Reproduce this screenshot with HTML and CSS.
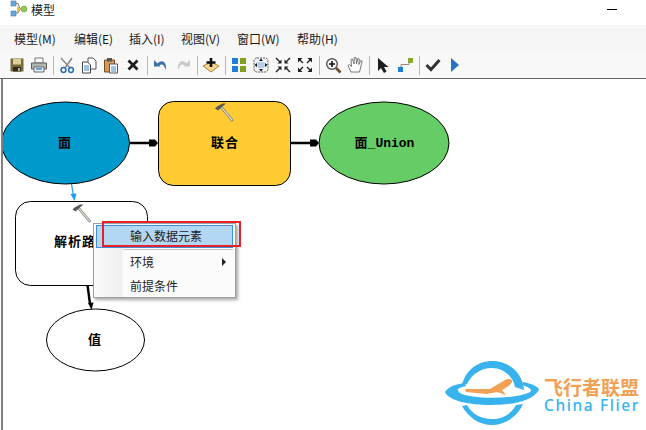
FILE: index.html
```html
<!DOCTYPE html>
<html lang="zh-CN">
<head>
    <meta charset="UTF-8">
    <title>模型</title>
    <link rel="stylesheet" href="styles.css">
</head>
<body>
    <svg class="defs" width="0" height="0">
        <defs>
            <g id="hammer">
                <path d="M6 4L17 17" stroke="#666" stroke-width="2.6" stroke-linecap="round"/>
                <path d="M6 4L17 17" stroke="#dcd8cc" stroke-width="1.4" stroke-linecap="round"/>
                <path d="M0 5.5L2 3.5L7.5 .5L11 .5L8 3L3 7.5Z" fill="#5a5a5a"/>
            </g>
        </defs>
    </svg>

    <div class="titlebar">
        <svg class="app-icon" width="18" height="18" viewBox="0 0 18 18">
            <path d="M4 3.5H8L10 9H14M10 9L8 13H4" fill="none" stroke="#8a7a4a" stroke-width="1"/>
            <rect x="1" y="1" width="5" height="5" fill="#6aa5dc" stroke="#4a7fb5" stroke-width=".6"/>
            <rect x="1" y="11" width="5" height="5" fill="#6aa5dc" stroke="#4a7fb5" stroke-width=".6"/>
            <path d="M7 6L11 9L7 12Z" fill="#f0c030"/>
            <circle cx="14" cy="9" r="3" fill="#92c85a" stroke="#6b9c3c" stroke-width=".6"/>
        </svg>
        <span class="title-text">模型</span>
        <div class="minimize"></div>
    </div>

    <div class="menubar">
        <span>模型(M)</span>
        <span>编辑(E)</span>
        <span>插入(I)</span>
        <span>视图(V)</span>
        <span>窗口(W)</span>
        <span>帮助(H)</span>
    </div>

    <div class="toolbar">
        <div class="tool"><svg width="16" height="16" viewBox="0 0 16 16"><path d="M1.5 1.5H14.5V14.5H1.5Z" fill="#7a6836"/><rect x="4" y="2" width="8" height="5.5" fill="#dccf9a"/><rect x="4" y="10" width="8" height="4.5" fill="#2e2a1e"/><rect x="9" y="11" width="2" height="3" fill="#b8b098"/></svg></div>
        <div class="tool"><svg width="18" height="16" viewBox="0 0 18 16"><path d="M5 1H13V6H5Z" fill="#fff" stroke="#777"/><path d="M1.5 6H16.5V12H1.5Z" fill="#b4b4b4" stroke="#5c5c5c"/><path d="M4 10H14V15H4Z" fill="#eef4fa" stroke="#666"/><path d="M6 12H12" stroke="#3f86c6" stroke-width="1.5"/></svg></div>
        <div class="tool-sep"></div>
        <div class="tool"><svg width="16" height="17" viewBox="0 0 16 17"><path d="M2 1L11 11M13 1L6 11" stroke="#8a8a8a" stroke-width="1.5"/><circle cx="4.5" cy="13" r="2.4" fill="none" stroke="#2a6fb0" stroke-width="1.5"/><circle cx="12" cy="13" r="2.4" fill="none" stroke="#2a6fb0" stroke-width="1.5"/></svg></div>
        <div class="tool"><svg width="16" height="17" viewBox="0 0 16 17"><path d="M7 1H12L15 4V12H7Z" fill="#fff" stroke="#555"/><path d="M1.5 5H6.5L9.5 8V16H1.5Z" fill="#fff" stroke="#444"/><path d="M3 9H8M3 11H8M3 13H8" stroke="#3f86c6"/></svg></div>
        <div class="tool"><svg width="16" height="17" viewBox="0 0 16 17"><path d="M1.5 3H11.5V15H1.5Z" fill="#d39a5e" stroke="#7a4a20"/><rect x="4" y="1" width="5" height="3.5" fill="#555"/><path d="M6.5 7H14.5V16H6.5Z" fill="#fff" stroke="#555"/><path d="M8 10H13M8 12H13M8 14H13" stroke="#3f86c6"/></svg></div>
        <div class="tool"><svg width="14" height="14" viewBox="0 0 14 14"><path d="M2.5 2.5L11.5 11.5M11.5 2.5L2.5 11.5" stroke="#1c1c1c" stroke-width="2.8"/></svg></div>
        <div class="tool-sep"></div>
        <div class="tool"><svg width="16" height="14" viewBox="0 0 16 14"><path d="M4 6C8 1 14 3 13 12C11 7 9 5 6 8Z" fill="#3f70a8"/><path d="M1 2V8.5H7.5Z" fill="#3f70a8"/></svg></div>
        <div class="tool"><svg width="16" height="14" viewBox="0 0 16 14"><path d="M12 6C8 1 2 3 3 12C5 7 7 5 10 8Z" fill="#c4c9c9"/><path d="M15 2V8.5H8.5Z" fill="#c4c9c9"/></svg></div>
        <div class="tool-sep"></div>
        <div class="tool"><svg width="18" height="18" viewBox="0 0 18 18"><path d="M1 10L9 6L17 10L9 16Z" fill="#f5d78e" stroke="#a8823a"/><path d="M9 2V11M4.5 6.5H13.5" stroke="#111" stroke-width="2.6"/></svg></div>
        <div class="tool-sep"></div>
        <div class="tool"><svg width="16" height="16" viewBox="0 0 16 16"><rect x="1" y="1" width="6" height="6" fill="#1f7fd6"/><rect x="9" y="1" width="6" height="6" fill="#7f9f1f"/><rect x="1" y="9" width="6" height="6" fill="#1f7fd6"/><rect x="9" y="9" width="6" height="6" fill="#7f9f1f"/></svg></div>
        <div class="tool"><svg width="16" height="16" viewBox="0 0 16 16"><rect x="1" y="1" width="14" height="14" rx="3" fill="#f2f4f6" stroke="#555" stroke-dasharray="2 1"/><rect x="4.5" y="5" width="7" height="6" fill="#b4cde8"/><path d="M8 1.5L10 4H6ZM8 14.5L6 12H10ZM1.5 8L4 6V10ZM14.5 8L12 10V6Z" fill="#111"/></svg></div>
        <div class="tool"><svg width="16" height="16" viewBox="0 0 16 16"><path d="M1 1L5 5M11 5L15 1M1 15L5 11M15 15L11 11" stroke="#222" stroke-width="1.4"/><path d="M6.5 6.5H2.5L6.5 2.5ZM9.5 6.5V2.5L13.5 6.5ZM6.5 9.5V13.5L2.5 9.5ZM9.5 9.5H13.5L9.5 13.5Z" fill="#222"/></svg></div>
        <div class="tool"><svg width="16" height="16" viewBox="0 0 16 16"><path d="M6 6L3 3M10 6L13 3M6 10L3 13M10 10L13 13" stroke="#222" stroke-width="1.4"/><path d="M1 1H5.5L1 5.5ZM15 1V5.5L10.5 1ZM1 15V10.5L5.5 15ZM15 15H10.5L15 10.5Z" fill="#222"/></svg></div>
        <div class="tool-sep"></div>
        <div class="tool"><svg width="17" height="17" viewBox="0 0 17 17"><circle cx="7" cy="7" r="5.3" fill="#f6f8fa" stroke="#555" stroke-width="1.4"/><path d="M7 4V10M4 7H10" stroke="#111" stroke-width="1.6"/><path d="M11 11L15.5 15.5" stroke="#6b4a2a" stroke-width="2.6"/></svg></div>
        <div class="tool"><svg width="17" height="18" viewBox="0 0 17 18"><path d="M4 16L1 9.5L2.5 8.5L4.5 10.5L4 3.5L5.5 3L7 8L7.3 1.5H9L9.5 8L10.8 2.5L12.3 3L11.8 8.5L13.8 4.5L15.2 5.2L13.5 12L12.5 16Z" fill="#fff" stroke="#777"/></svg></div>
        <div class="tool-sep"></div>
        <div class="tool"><svg width="14" height="17" viewBox="0 0 14 17"><path d="M2 1V14L5 11L8 16L10.5 14.5L8 10H12.5Z" fill="#1c1c1c"/></svg></div>
        <div class="tool"><svg width="17" height="16" viewBox="0 0 17 16"><path d="M4 11V7.5H12V4" fill="none" stroke="#9a8a7a"/><rect x="1" y="10" width="5" height="5" fill="#1f7fd6"/><rect x="11" y="1" width="5" height="5" fill="#8aa92a"/></svg></div>
        <div class="tool-sep"></div>
        <div class="tool"><svg width="16" height="14" viewBox="0 0 16 14"><path d="M1.5 7L6 11.5L14.5 2" fill="none" stroke="#333" stroke-width="3"/></svg></div>
        <div class="tool"><svg width="12" height="16" viewBox="0 0 12 16"><path d="M2 1L10 8L2 15Z" fill="#2a73c4"/></svg></div>
    </div>

    <div class="canvas">
        <svg class="diagram" width="646" height="351" viewBox="0 79 646 351">
            <path class="link" d="M130 143H150M290 143H310M87.5 285L90 304"/>
            <path class="head" d="M149 139.5H155L158 143L155 146.5H149Z"/>
            <path class="head" d="M310 139.5H316L319 143L316 146.5H310Z"/>
            <path class="head" d="M88 303L93.5 302.5L91.5 310Z"/>
            <path class="link-blue" d="M71.5 184L73.5 196"/>
            <path class="head-blue" d="M70.5 194L76.5 193.5L74.5 201Z"/>

            <ellipse class="node node-blue" cx="65.5" cy="143" rx="64" ry="41"/>
            <rect class="node node-yellow" x="158.5" y="101.5" width="132" height="84" rx="15"/>
            <ellipse class="node node-green" cx="384" cy="143" rx="65" ry="41"/>
            <rect class="node" x="15.5" y="201.5" width="132" height="84" rx="15"/>
            <ellipse class="node" cx="95.5" cy="340" rx="49" ry="31"/>

            <use href="#hammer" x="215" y="103"/>
            <use href="#hammer" x="72.5" y="204"/>

            <text class="label" x="65" y="146.5">面</text>
            <text class="label" x="225" y="146.5">联合</text>
            <text class="label label-mono" x="384.5" y="146.5">面_Union</text>
            <text class="label label-left" x="54" y="246">解析路径</text>
            <text class="label" x="95" y="344">值</text>
        </svg>

        <div class="gutter-line"></div>

        <div class="context-menu">
            <div class="menu-item active">输入数据元素</div>
            <div class="menu-sep"></div>
            <div class="menu-item">环境<span class="submenu-arrow"></span></div>
            <div class="menu-item">前提条件</div>
        </div>
        <div class="red-box"></div>

        <div class="watermark">
            <svg class="wm-logo" width="96" height="68" viewBox="0 0 96 68">
                <path d="M17 26C21 10 34 2 47 2C65 2 78 15 79 31L70 28C68 17 58 9 47 9C36 9 27 15 22 25Z" fill="#38b3ee"/>
                <path d="M22 46C27 55 36 60 47 60C58 60 66 55 71 46L78 45C72 58 60 66 47 66C34 66 23 58 17 47Z" fill="#38b3ee"/>
                <path d="M0 33C3 28 10 25 20 24L21 27C12 29 11 31 15 34C24 40 70 41 85 33C88 31 84 28 77 26L78 23C88 25 94 28 94 31C86 44 62 46 46 46C24 46 4 42 0 33Z" fill="#38b3ee"/>
                <path d="M20 30H45L60 21C64 19 68 20 67 23C65 27 60 29 57 31L61 36L52 33L42 35L21 33Z" fill="#f2a154"/>
            </svg>
            <div class="wm-text">
                <div class="wm-cn">飞行者联盟</div>
                <div class="wm-en">China Flier</div>
            </div>
        </div>
    </div>
</body>
</html>
```

FILE: styles.css
```css
body {
    margin: 0;
    width: 646px;
    height: 430px;
    overflow: hidden;
    background: #fff;
    font-family: "Noto Sans CJK SC", "Noto Sans", sans-serif;
    font-size: 12px;
    color: #1a1a1a;
}
.defs {
    display: block;
    height: 0;
}
.titlebar {
    height: 25px;
    display: flex;
    align-items: flex-start;
    padding-left: 10px;
    background: #fff;
}
.title-text {
    margin-left: 3px;
    font-size: 12px;
    line-height: 19px;
}
.minimize {
    width: 10px;
    height: 1px;
    background: #000;
    margin: 9px 0 0 552px;
}
.menubar {
    height: 27px;
    display: grid;
    grid-template-columns: 60px 55px 52px 56px 60px auto;
    padding-left: 14px;
    background: #f5f5f5;
    line-height: 27px;
}
.toolbar {
    height: 26px;
    display: flex;
    align-items: center;
    padding-left: 6px;
    background: #f8f8f8;
    border-bottom: 1px solid #666;
    box-sizing: content-box;
}
.tool {
    width: 22px;
    height: 22px;
    display: flex;
    align-items: center;
    justify-content: center;
}
.tool-sep {
    width: 1px;
    height: 19px;
    margin: 0 2.5px;
    background: #b8b8b8;
}
.canvas {
    position: relative;
    height: 351px;
    overflow: hidden;
    background: #fff;
}
.diagram {
    position: absolute;
    left: 0;
    top: 0;
}
.gutter-line {
    position: absolute;
    left: 1px;
    top: 0;
    bottom: 0;
    width: 2px;
    background: #808080;
}
.node {
    fill: #fff;
    stroke: #000;
    stroke-width: 1;
}
.node-blue {
    fill: #0099cc;
}
.node-yellow {
    fill: #ffcb33;
}
.node-green {
    fill: #66cc66;
}
.link {
    fill: none;
    stroke: #000;
    stroke-width: 2.4;
}
.head {
    fill: #000;
}
.link-blue {
    fill: none;
    stroke: #1e9bf0;
    stroke-width: 1.2;
}
.head-blue {
    fill: #1e9bf0;
}
.label {
    font-family: "Noto Sans CJK SC", sans-serif;
    font-size: 13px;
    font-weight: 700;
    letter-spacing: 1px;
    text-anchor: middle;
    fill: #000;
}
.label-left {
    text-anchor: start;
}
.label-mono {
    font-family: "Liberation Mono", "Noto Sans CJK SC", monospace;
    letter-spacing: 0;
}
.context-menu {
    position: absolute;
    left: 93px;
    top: 144px;
    width: 143px;
    height: 75px;
    box-sizing: border-box;
    padding: 1px 2px 0;
    background: linear-gradient(to right, #fafafa 0, #efefef 28px, #fbfbfb 29px);
    border: 1px solid #a0a0a0;
    box-shadow: 2px 2px 3px rgba(0,0,0,0.35);
    color: #222;
}
.menu-item {
    position: relative;
    height: 24px;
    line-height: 23px;
    padding-left: 34px;
}
.menu-item.active {
    height: 23px;
    line-height: 20px;
    box-sizing: border-box;
    background: #b3d7f3;
    border: 1px solid #3d8fd6;
    padding-left: 33px;
}
.menu-sep {
    height: 1px;
    margin: 1px 0 0 27px;
    background: #c4c4c4;
}
.submenu-arrow {
    position: absolute;
    right: 7px;
    top: 8px;
    border-left: 4px solid #222;
    border-top: 4px solid transparent;
    border-bottom: 4px solid transparent;
}
.red-box {
    position: absolute;
    left: 102px;
    top: 142px;
    width: 139px;
    height: 26px;
    box-sizing: border-box;
    border: 2px solid #e8202a;
}
.watermark {
    position: absolute;
    left: 445px;
    top: 280px;
    display: flex;
    align-items: flex-start;
}
.wm-logo {
    display: block;
}
.wm-text {
    margin: 18px 0 0 3px;
}
.wm-cn {
    font-size: 19px;
    font-weight: 700;
    line-height: 20px;
    color: #f2a154;
    white-space: nowrap;
}
.wm-en {
    font-family: "Noto Sans", sans-serif;
    font-size: 15.5px;
    font-weight: 500;
    line-height: 16px;
    letter-spacing: 1.6px;
    color: #38b3ee;
    white-space: nowrap;
}
```
